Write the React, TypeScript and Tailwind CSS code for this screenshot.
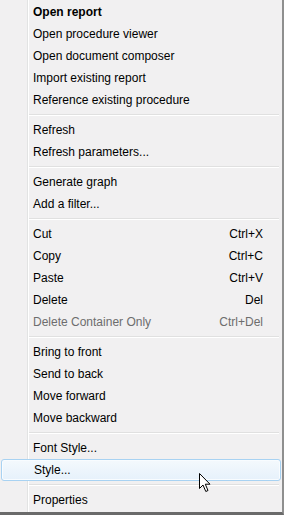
type Item = { label: string; shortcut?: string; bold?: boolean; disabled?: boolean; hover?: boolean };

const groups: Item[][] = [
  [
    { label: 'Open report', bold: true },
    { label: 'Open procedure viewer' },
    { label: 'Open document composer' },
    { label: 'Import existing report' },
    { label: 'Reference existing procedure' },
  ],
  [{ label: 'Refresh' }, { label: 'Refresh parameters...' }],
  [{ label: 'Generate graph' }, { label: 'Add a filter...' }],
  [
    { label: 'Cut', shortcut: 'Ctrl+X' },
    { label: 'Copy', shortcut: 'Ctrl+C' },
    { label: 'Paste', shortcut: 'Ctrl+V' },
    { label: 'Delete', shortcut: 'Del' },
    { label: 'Delete Container Only', shortcut: 'Ctrl+Del', disabled: true },
  ],
  [
    { label: 'Bring to front' },
    { label: 'Send to back' },
    { label: 'Move forward' },
    { label: 'Move backward' },
  ],
  [{ label: 'Font Style...' }, { label: 'Style...', hover: true }],
  [{ label: 'Properties' }],
];

function MenuRow({ item }: { item: Item }) {
  return (
    <div
      className={[
        'relative flex h-[22px] items-center pl-[32px] pr-[18px]',
        item.hover
          ? 'rounded-[3px] border border-[#a8d2f2] bg-[linear-gradient(#f4f9fd,#e6f1fb)] shadow-[inset_0_0_0_1px_#f8fcff]'
          : '',
        item.disabled ? 'text-[#6d6d6d]' : 'text-black',
        item.bold ? 'font-bold' : '',
      ].join(' ')}
    >
      <span className="flex-1">{item.label}</span>
      {item.shortcut ? <span>{item.shortcut}</span> : null}
      {/* mouse pointer over the hovered row */}
      {item.hover ? (
        <svg
          className="absolute left-[196px] top-[12px]"
          width="13"
          height="21"
          viewBox="0 0 13 21"
        >
          <path
            d="M1.5 1.5 L1.5 16.5 L5 13 L7.8 19.5 L10 18.5 L7.3 12.2 L12 12.2 Z"
            fill="#fff"
            stroke="#000"
            strokeWidth="1"
            strokeLinejoin="miter"
          />
        </svg>
      ) : null}
    </div>
  );
}

function Separator() {
  return (
    <div className="flex h-[8px] flex-col justify-center pl-[28px] pr-[2px]">
      <div className="h-px bg-[#e0e0e0]" />
      <div className="h-px bg-white" />
    </div>
  );
}

export default function App() {
  return (
    <div className="flex h-[515px] w-[284px] flex-col bg-white font-['Segoe_UI','Liberation_Sans',sans-serif] text-[12px] leading-none">
      <div className="flex flex-1 flex-col border-r-2 border-b-[3px] border-r-[#8f8f8f] border-b-[#6a6a6a] bg-[#f1f0f1] bg-[linear-gradient(to_right,transparent_27px,#e2e3e3_27px,#e2e3e3_28px,#fff_28px,#fff_29px,transparent_29px)] pt-px pl-px pr-px">
        {groups.map((g, gi) => (
          <div key={gi}>
            {gi > 0 ? <Separator /> : null}
            {g.map((item) => (
              <MenuRow key={item.label} item={item} />
            ))}
          </div>
        ))}
      </div>
    </div>
  );
}
